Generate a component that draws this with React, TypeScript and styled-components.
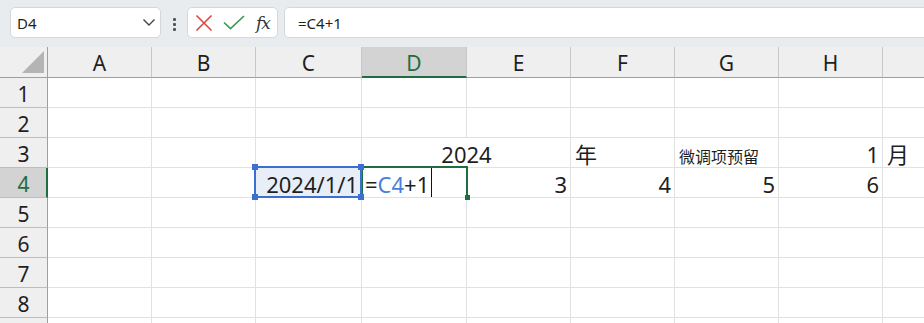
import styled, { createGlobalStyle } from 'styled-components'

const GREEN = '#1e6e42'
const BLUE = '#3c6fd0'

const GlobalStyle = createGlobalStyle`
  html, body {
    margin: 0;
    padding: 0;
    background: #fff;
  }
  body {
    font-family: 'Noto Sans', 'Noto Sans CJK SC', sans-serif;
    color: #1f1f1f;
  }
`

const Page = styled.div`
  width: 924px;
  height: 323px;
  overflow: hidden;
  display: flex;
  flex-direction: column;
  background: #fff;
`

const Toolbar = styled.div`
  flex: none;
  height: 47px;
  box-sizing: border-box;
  display: flex;
  align-items: flex-start;
  padding: 7px 0 0 10px;
  background: #e9ecef;
`

const Field = styled.div`
  height: 31px;
  box-sizing: border-box;
  background: #fff;
  border: 1px solid #d5d8db;
  border-radius: 5px;
  display: flex;
  align-items: center;
  font-size: 15px;
  color: #1f1f1f;
`

const NameBox = styled(Field)`
  width: 151px;
  justify-content: space-between;
  padding: 0 4px 0 6px;
`

const Dots = styled.div`
  margin: 11px 11px 0 12px;
  display: flex;
  flex-direction: column;
  gap: 2px;
`

const Dot = styled.span`
  width: 3px;
  height: 3px;
  border-radius: 1px;
  background: #555;
`

const ButtonGroup = styled(Field)`
  width: 91px;
  padding: 0 0 0 7px;
  gap: 10px;
`

const Fx = styled.span`
  font-family: 'DejaVu Serif', 'Liberation Serif', serif;
  font-style: italic;
  font-size: 17px;
  color: #333;
  margin-left: 1px;
  letter-spacing: -1px;
`

const FormulaBox = styled(Field)`
  flex: 1;
  margin: 0 -12px 0 6px;
  padding-left: 13px;
`

const Sheet = styled.div`
  display: grid;
  grid-template-columns: 48px 104px 104px 106px 105px 104px 104px 104px 104px 120px;
  grid-template-rows: 31px;
  grid-auto-rows: 30px;
`

const Corner = styled.div`
  background: #efefef;
  border-right: 1px solid #9e9e9e;
  border-bottom: 1px solid #9e9e9e;
  display: flex;
  justify-content: flex-end;
  align-items: flex-end;
  padding: 0 3px 4px 0;
`

const Triangle = styled.span`
  width: 0;
  height: 0;
  border-left: 22px solid transparent;
  border-bottom: 22px solid #b4b4b4;
`

const ColHeader = styled.div<{ $active?: boolean }>`
  background: ${({ $active }) => ($active ? '#d3d3d3' : '#efefef')};
  color: ${({ $active }) => ($active ? GREEN : '#1f1f1f')};
  border-right: 1px solid #c8c8c8;
  border-bottom: ${({ $active }) => ($active ? `2px solid ${GREEN}` : '1px solid #9e9e9e')};
  display: flex;
  align-items: center;
  justify-content: center;
  padding-top: 2px;
  font-size: 21px;
`

const RowHeader = styled.div<{ $active?: boolean }>`
  background: ${({ $active }) => ($active ? '#d3d3d3' : '#efefef')};
  color: ${({ $active }) => ($active ? GREEN : '#1f1f1f')};
  border-right: ${({ $active }) => ($active ? `2px solid ${GREEN}` : '1px solid #9e9e9e')};
  border-bottom: 1px solid #bdbdbd;
  display: flex;
  align-items: center;
  justify-content: center;
  padding: 2px 0 0 ${({ $active }) => ($active ? '1px' : '0')};
  font-size: 21px;
`

const Cell = styled.div<{ $align?: 'left' | 'right' | 'center'; $small?: boolean; $span?: number; $bg?: string }>`
  position: relative;
  grid-column: span ${({ $span }) => $span ?? 1};
  border-right: 1px solid #e1e1e1;
  border-bottom: 1px solid #e1e1e1;
  background: ${({ $bg }) => $bg ?? 'transparent'};
  display: flex;
  align-items: flex-end;
  justify-content: ${({ $align }) =>
    $align === 'right' ? 'flex-end' : $align === 'center' ? 'center' : 'flex-start'};
  padding: 0 3px 2px 4px;
  font-size: ${({ $small }) => ($small ? '16px' : '22px')};
  line-height: 1;
  white-space: nowrap;
`

const SelectFrame = styled.div`
  position: absolute;
  left: -2px;
  top: -2px;
  right: -1px;
  bottom: -1px;
  border: 2px solid ${BLUE};
  z-index: 3;
  pointer-events: none;
`

const Handle = styled.span<{ $v: 'top' | 'bottom'; $h: 'left' | 'right' }>`
  position: absolute;
  width: 6px;
  height: 6px;
  background: ${BLUE};
  ${({ $v }) => `${$v}: -4px;`}
  ${({ $h }) => `${$h}: -4px;`}
`

const EditFrame = styled.div`
  position: absolute;
  left: -1px;
  top: -2px;
  right: -2px;
  bottom: 0;
  border: 2px solid ${GREEN};
  border-bottom: none;
  z-index: 2;
  pointer-events: none;
`

const FillHandle = styled.span`
  position: absolute;
  right: -4px;
  bottom: -3px;
  width: 5px;
  height: 5px;
  background: ${GREEN};
`

const EditCell = styled(Cell)`
  padding-left: 3px;
`

const Ref = styled.span`
  color: #4a80dc;
`

const Caret = styled.span`
  align-self: stretch;
  width: 1px;
  margin: -1px 0 -2px 2px;
  background: #111;
`

// only the labels that fit in the window are shown
const COLS = ['A', 'B', 'C', 'D', 'E', 'F', 'G', 'H', '']
const ROWS = [1, 2, 3, 4, 5, 6, 7, 8, 9]

function EmptyCells({ count }: { count: number }) {
  return (
    <>
      {Array.from({ length: count }).map((_, i) => (
        <Cell key={i} />
      ))}
    </>
  )
}

export default function App() {
  return (
    <Page>
      <GlobalStyle />
      <Toolbar>
        <NameBox>
          <span>D4</span>
          <svg width="14" height="9" viewBox="0 0 14 9">
            <path d="M1.5 1.5 L7 7 L12.5 1.5" fill="none" stroke="#444" strokeWidth="1.4" />
          </svg>
        </NameBox>
        <Dots>
          <Dot />
          <Dot />
          <Dot />
        </Dots>
        <ButtonGroup>
          <svg width="18" height="18" viewBox="0 0 18 18">
            <path d="M1.5 1.5 L16.5 16.5 M16.5 1.5 L1.5 16.5" stroke="#e2463f" strokeWidth="1.6" />
          </svg>
          <svg width="22" height="15" viewBox="0 0 22 15">
            <path d="M1 7.5 L7.5 13.5 L21 1" fill="none" stroke="#3a9a50" strokeWidth="1.7" />
          </svg>
          <Fx>fx</Fx>
        </ButtonGroup>
        <FormulaBox>=C4+1</FormulaBox>
      </Toolbar>

      <Sheet>
        <Corner>
          <Triangle />
        </Corner>
        {COLS.map((c, i) => (
          <ColHeader key={i} $active={c === 'D'}>
            {c}
          </ColHeader>
        ))}

        {ROWS.map((r) => {
          const label = r < 9 ? r : ''
          if (r === 3) {
            return [
              <RowHeader key={`h${r}`}>{label}</RowHeader>,
              <EmptyCells key="e3a" count={3} />,
              <Cell key="d3" $span={2} $align="center">
                2024
              </Cell>,
              <Cell key="f3">年</Cell>,
              <Cell key="g3" $small>
                微调项预留
              </Cell>,
              <Cell key="h3" $align="right">
                1
              </Cell>,
              <Cell key="i3">月</Cell>,
            ]
          }
          if (r === 4) {
            return [
              <RowHeader key={`h${r}`} $active>
                {label}
              </RowHeader>,
              <EmptyCells key="e4a" count={2} />,
              <Cell key="c4" $align="right" $bg="#e8eef8">
                2024/1/1
                <SelectFrame>
                  <Handle $v="top" $h="left" />
                  <Handle $v="top" $h="right" />
                  <Handle $v="bottom" $h="left" />
                  <Handle $v="bottom" $h="right" />
                </SelectFrame>
              </Cell>,
              <EditCell key="d4">
                <span>
                  =<Ref>C4</Ref>+1
                </span>
                <Caret />
                <EditFrame>
                  <FillHandle />
                </EditFrame>
              </EditCell>,
              <Cell key="e4" $align="right">
                3
              </Cell>,
              <Cell key="f4" $align="right">
                4
              </Cell>,
              <Cell key="g4" $align="right">
                5
              </Cell>,
              <Cell key="h4" $align="right">
                6
              </Cell>,
              <Cell key="i4" />,
            ]
          }
          return [
            <RowHeader key={`h${r}`}>{label}</RowHeader>,
            <EmptyCells key={`e${r}`} count={9} />,
          ]
        })}
      </Sheet>
    </Page>
  )
}
